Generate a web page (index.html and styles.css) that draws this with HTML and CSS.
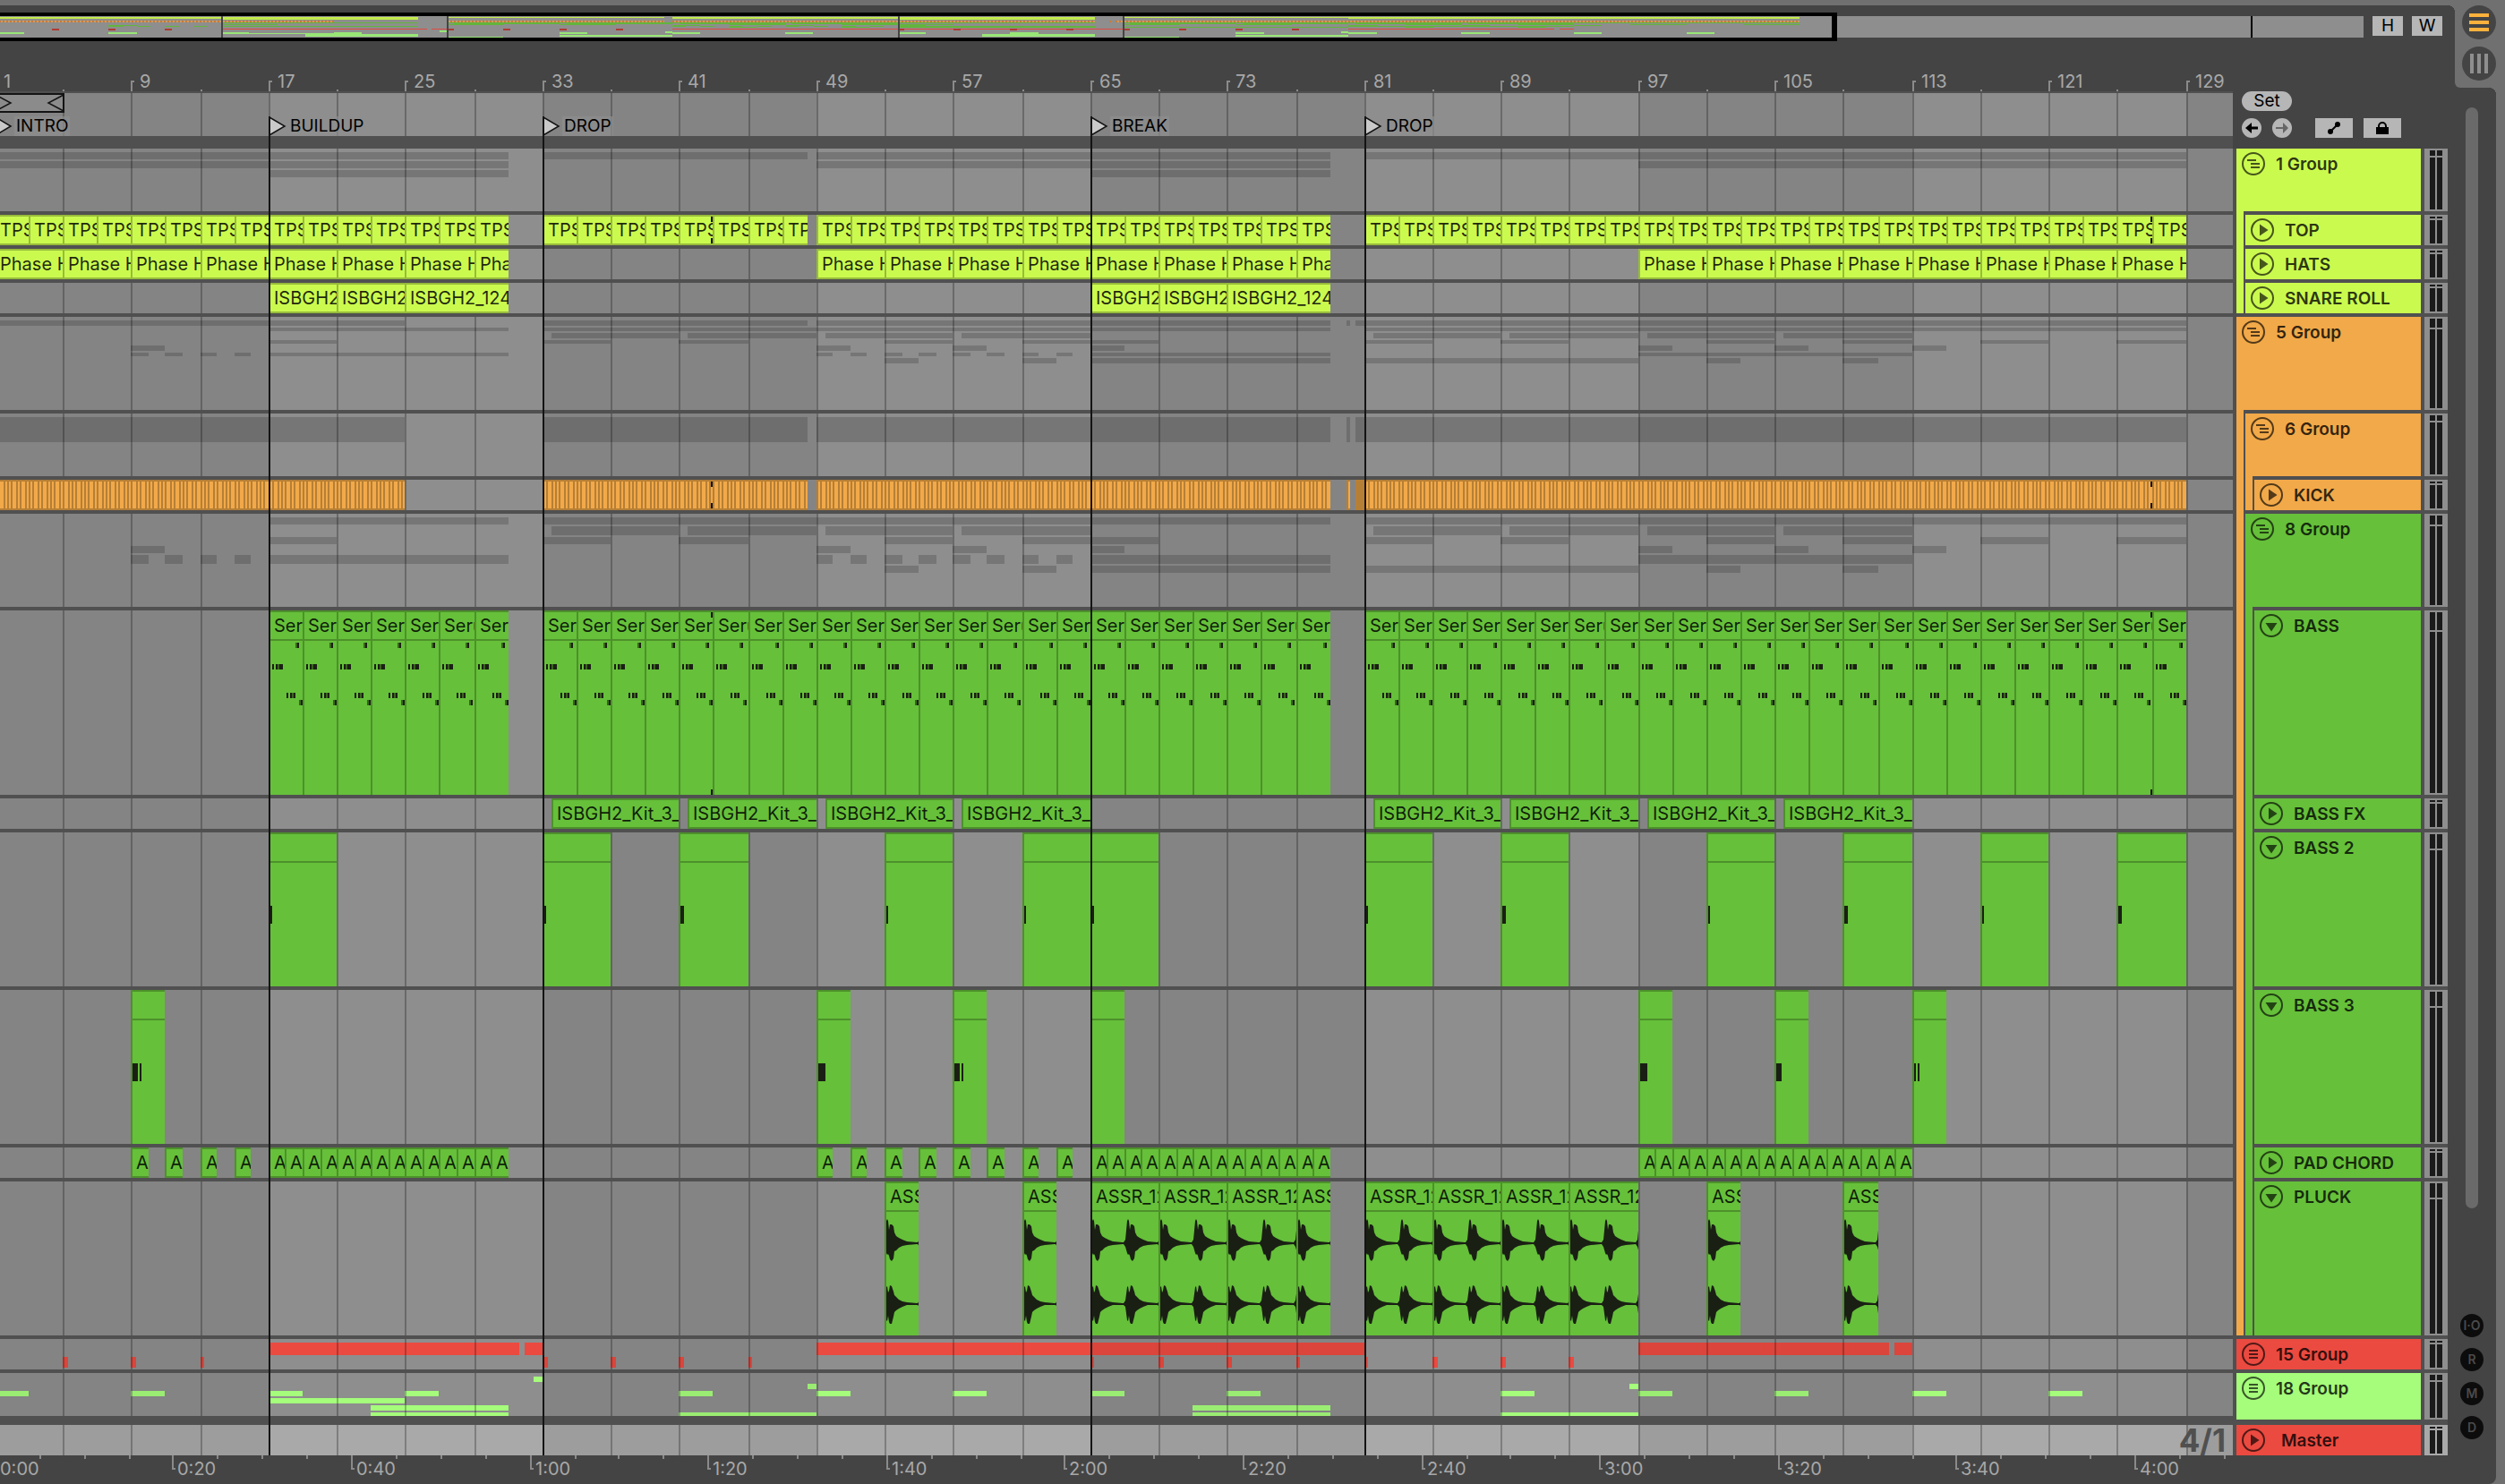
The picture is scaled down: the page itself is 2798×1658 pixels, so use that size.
FILE: index.html
```html
<!DOCTYPE html>
<html lang="en">
<head>
<meta charset="utf-8">
<title>Arrangement</title>
<link rel="stylesheet" href="styles.css">
</head>
<body>
<svg class="symbols" aria-hidden="true">
  <symbol id="i-group" viewBox="0 0 26 26"><circle cx="13" cy="13" r="12" fill="none" stroke="currentColor" stroke-width="2"/><path d="M6 9h10M10 13h10M10 17h10" stroke="currentColor" stroke-width="2"/></symbol>
  <symbol id="i-folded" viewBox="0 0 26 26"><circle cx="13" cy="13" r="12" fill="none" stroke="currentColor" stroke-width="2"/><path d="M8 9h10M8 13h10M8 17h10" stroke="currentColor" stroke-width="2"/></symbol>
  <symbol id="i-play" viewBox="0 0 26 26"><circle cx="13" cy="13" r="12" fill="none" stroke="currentColor" stroke-width="2"/><path d="M10 6.5v13l9.5-6.5z" fill="currentColor"/></symbol>
  <symbol id="i-open" viewBox="0 0 26 26"><circle cx="13" cy="13" r="12" fill="none" stroke="currentColor" stroke-width="2"/><path d="M6.5 10h13l-6.5 9.5z" fill="currentColor"/></symbol>
  <symbol id="i-flag" viewBox="0 0 20 22"><path d="M1 1v20l17-10z" fill="#c9c9c9" stroke="#111" stroke-width="1.5"/></symbol>
</svg>

<main class="panel">
  <div class="overview-bar">
    <div class="overview" id="overview"><div class="overview-range"></div><div class="overview-end"></div></div>
    <button class="flat-btn">H</button>
    <button class="flat-btn">W</button>
  </div>

  <div class="arrangement">
    <section class="timeline">
      <div class="bar-ruler" id="bar-ruler"></div>
      <div class="timeline-body" id="timeline-body">
        <div class="lane scrub" id="scrub"></div>
        <div class="lane h-group group-lane" data-track="g1"></div>
        <div class="lane h-row" data-track="top"></div>
        <div class="lane h-row" data-track="hats"></div>
        <div class="lane h-row" data-track="snare"></div>
        <div class="lane h-group-tall group-lane" data-track="g5"></div>
        <div class="lane h-group group-lane" data-track="g6"></div>
        <div class="lane h-row" data-track="kick"></div>
        <div class="lane h-group-tall group-lane" data-track="g8"></div>
        <div class="lane h-bass" data-track="bass"></div>
        <div class="lane h-row" data-track="bassfx"></div>
        <div class="lane h-open" data-track="bass2"></div>
        <div class="lane h-open" data-track="bass3"></div>
        <div class="lane h-row" data-track="pad"></div>
        <div class="lane h-open" data-track="pluck"></div>
        <div class="lane h-row group-lane" data-track="g15"></div>
        <div class="lane h-last group-lane" data-track="g18"></div>
        <div class="lane h-row master-lane"><span class="signature">4/1</span></div>
      </div>
      <div class="time-ruler" id="time-ruler"></div>
    </section>

    <section class="side">
      <div class="controls">
        <button class="pill">Set</button>
        <div class="control-row">
          <button class="round" aria-label="Previous locator"><svg width="22" height="22" viewBox="0 0 22 22"><path d="M18 11H9" stroke="#000" stroke-width="3"/><path d="M4 11l7-6v12z" fill="#000"/></svg></button>
          <button class="round next" aria-label="Next locator"><svg width="22" height="22" viewBox="0 0 22 22"><path d="M4 11h9" stroke="#666" stroke-width="2"/><path d="M18 11l-6-6v12z" fill="#666"/></svg></button>
          <button class="wide automation" aria-label="Automation mode"><svg width="42" height="22" viewBox="0 0 42 22"><path d="M17 15l8-8" stroke="#000" stroke-width="2"/><circle cx="17" cy="15" r="3" fill="#000"/><circle cx="25" cy="7" r="3" fill="#000"/></svg></button>
          <button class="wide" aria-label="Lock envelopes"><svg width="42" height="22" viewBox="0 0 42 22"><path d="M14 10h14v8H14z" fill="#000"/><path d="M17 11V9a4 4 0 0 1 8 0v2" fill="none" stroke="#000" stroke-width="2"/></svg></button>
        </div>
      </div>

      <div class="track-area">
        <div class="headers">
          <div class="group lime">
            <div class="title h-group"><button class="icon" aria-label="Fold"><svg><use href="#i-group"/></svg></button><span>1 Group</span></div>
            <div class="children">
              <div class="title lime h-row"><button class="icon" aria-label="Unfold"><svg><use href="#i-play"/></svg></button><span>TOP</span></div>
              <div class="title lime h-row"><button class="icon" aria-label="Unfold"><svg><use href="#i-play"/></svg></button><span>HATS</span></div>
              <div class="title lime h-row"><button class="icon" aria-label="Unfold"><svg><use href="#i-play"/></svg></button><span>SNARE ROLL</span></div>
            </div>
          </div>
          <div class="group orange">
            <div class="title h-group-tall"><button class="icon" aria-label="Fold"><svg><use href="#i-group"/></svg></button><span>5 Group</span></div>
            <div class="children">
              <div class="group orange">
                <div class="title h-group"><button class="icon" aria-label="Fold"><svg><use href="#i-group"/></svg></button><span>6 Group</span></div>
                <div class="children">
                  <div class="title orange h-row"><button class="icon" aria-label="Unfold"><svg><use href="#i-play"/></svg></button><span>KICK</span></div>
                </div>
              </div>
              <div class="group green">
                <div class="title h-group-tall"><button class="icon" aria-label="Fold"><svg><use href="#i-group"/></svg></button><span>8 Group</span></div>
                <div class="children">
                  <div class="title green h-bass"><button class="icon" aria-label="Fold"><svg><use href="#i-open"/></svg></button><span>BASS</span></div>
                  <div class="title green h-row"><button class="icon" aria-label="Unfold"><svg><use href="#i-play"/></svg></button><span>BASS FX</span></div>
                  <div class="title green h-open"><button class="icon" aria-label="Fold"><svg><use href="#i-open"/></svg></button><span>BASS 2</span></div>
                  <div class="title green h-open"><button class="icon" aria-label="Fold"><svg><use href="#i-open"/></svg></button><span>BASS 3</span></div>
                  <div class="title green h-row"><button class="icon" aria-label="Unfold"><svg><use href="#i-play"/></svg></button><span>PAD CHORD</span></div>
                  <div class="title green h-open"><button class="icon" aria-label="Fold"><svg><use href="#i-open"/></svg></button><span>PLUCK</span></div>
                </div>
              </div>
            </div>
          </div>
          <div class="title red h-row"><button class="icon" aria-label="Unfold"><svg><use href="#i-folded"/></svg></button><span>15 Group</span></div>
          <div class="title mint h-last-head"><button class="icon" aria-label="Unfold"><svg><use href="#i-folded"/></svg></button><span>18 Group</span></div>
          <div class="title red h-row master"><button class="icon" aria-label="Unfold"><svg><use href="#i-play"/></svg></button><span>Master</span></div>
        </div>
        <div class="meters">
          <div class="meter h-group"><i></i><i></i></div>
          <div class="meter h-row"><i></i><i></i></div>
          <div class="meter h-row"><i></i><i></i></div>
          <div class="meter h-row"><i></i><i></i></div>
          <div class="meter h-group-tall"><i></i><i></i></div>
          <div class="meter h-group"><i></i><i></i></div>
          <div class="meter h-row"><i></i><i></i></div>
          <div class="meter h-group-tall"><i></i><i></i></div>
          <div class="meter h-bass"><i></i><i></i></div>
          <div class="meter h-row"><i></i><i></i></div>
          <div class="meter h-open"><i></i><i></i></div>
          <div class="meter h-open"><i></i><i></i></div>
          <div class="meter h-row"><i></i><i></i></div>
          <div class="meter h-open"><i></i><i></i></div>
          <div class="meter h-row"><i></i><i></i></div>
          <div class="meter h-last-head"><i></i><i></i></div>
          <div class="meter h-row master"><i></i><i></i></div>
        </div>
      </div>
    </section>

    <aside class="rail">
      <div class="scrollbar"></div>
      <div class="rail-buttons">
        <button class="dot">I·O</button>
        <button class="dot">R</button>
        <button class="dot">M</button>
        <button class="dot">D</button>
      </div>
    </aside>
  </div>
</main>

<nav class="view-toggles">
  <button class="view-toggle" aria-label="Arrangement view"><svg width="38" height="38" viewBox="0 0 38 38"><path d="M8 11h22M8 19h22M8 27h22" stroke="#fbb13c" stroke-width="4"/></svg></button>
  <button class="view-toggle" aria-label="Session view"><svg width="38" height="38" viewBox="0 0 38 38"><path d="M11 8v22M19 8v22M27 8v22" stroke="#8e8e8e" stroke-width="4"/></svg></button>
</nav>
<script src="timeline.js"></script>
</body>
</html>
```
FILE: styles.css
```css
* { box-sizing: border-box; }

:root {
  --panel: #444;
  --line: #505050;
  --lane: #8e8e8e;
  --frame: #707070;
  --control: #b6b6b6;
}

body {
  margin: 0;
  background: var(--frame);
  color: #000;
  font: 19px/24px Inter, "Liberation Sans", sans-serif;
  position: relative;
  overflow-x: hidden;
}

button {
  margin: 0;
  padding: 0;
  border: 0;
  background: none;
  color: inherit;
  font: inherit;
  display: flex;
  align-items: center;
  justify-content: center;
}

.symbols { position: absolute; width: 0; height: 0; }

.panel {
  margin: 6px 10px 0 0;
  padding-top: 8px;
  background: var(--panel);
  border-radius: 0 0 8px 0;
}

/* overview strip */
.overview-bar { display: flex; gap: 10px; padding-right: 60px; }
.overview {
  flex: 1;
  height: 24px;
  margin: 4px 0;
  background: var(--lane);
  position: relative;
}
.overview-range {
  position: absolute;
  z-index: 3;
  left: 0;
  top: -4px;
  width: 77.73%;
  height: 32px;
  border: solid #000;
  border-width: 4px 6px 4px 0;
}
.overview-end { position: absolute; left: 95.23%; top: 0; width: 2px; height: 24px; background: #000; }
.flat-btn { width: 34px; height: 22px; margin-top: 4px; background: var(--control); }
.mini { position: absolute; }
.mini.kick-mini { background: repeating-linear-gradient(90deg, #c87a35 0 2px, #c79e6c 2px 4px); }
.overview .mini.locator { background: #444; width: 2px; height: 24px; top: 0; z-index: 2; }

/* main columns */
.arrangement { display: flex; }
.timeline { flex: 1; min-width: 0; overflow: hidden; }
.side { width: 240px; }
.rail { width: 54px; }

/* rulers */
.bar-ruler { height: 56px; position: relative; }
.time-ruler { height: 32px; position: relative; }
.tick { position: absolute; width: 2px; background: #8a8a8a; }
.bar-ruler .tick { bottom: 0; height: 2px; }
.bar-ruler .tick.major {
  width: 4px;
  height: 12px;
  background: none;
  border: solid #8a8a8a;
  border-width: 2px 0 0 2px;
}
.time-ruler .tick { top: 0; height: 4px; }
.time-ruler .tick.major {
  width: 4px;
  height: 16px;
  background: none;
  border: solid #8a8a8a;
  border-width: 0 0 2px 2px;
}
.tick-label { position: absolute; color: #a8a8a8; font-size: 20px; }
.bar-ruler .tick-label { top: 33px; }
.time-ruler .tick-label { top: 3px; }

/* lanes */
.timeline-body {
  position: relative;
  display: flex;
  flex-direction: column;
  gap: 4px;
  padding-top: 2px;
  background: var(--line);
}
.lane { position: relative; overflow: hidden; background: var(--lane); flex: none; }
.scrub { height: 48px; margin-bottom: 10px; }
.master-lane { background: #a9a9a9; margin-top: 6px; }
.h-row { height: 34px; --peak: 2px; }
.h-group { height: 70px; --peak: 6px; }
.h-group-tall { height: 104px; --peak: 10px; }
.h-bass { height: 206px; --peak: 20px; }
.h-open { height: 172px; --peak: 16px; }
.h-last { height: 48px; }
.h-last-head { height: 52px; --peak: 6px; }

.shade, .grid-line { position: absolute; top: 0; bottom: 0; z-index: 2; }
.shade { background: rgba(0, 0, 0, .065); }
.grid-line { width: 2px; background: rgba(0, 0, 0, .25); }
.locator-line { position: absolute; top: 28px; bottom: 0; width: 2px; background: #141414; z-index: 5; }
.signature {
  position: absolute;
  z-index: 3;
  right: 8px;
  top: 0;
  font-size: 35px;
  line-height: 34px;
  font-weight: 700;
  color: var(--line);
}

/* scrub area */
.loop-brace { position: absolute; left: -6px; top: 0; z-index: 3; }
.locator { position: absolute; z-index: 3; top: 26px; height: 22px; display: flex; gap: 2px; }
.locator svg { width: 20px; height: 22px; }
.locator span { background: rgba(142, 142, 142, .7); line-height: 22px; padding: 0 2px; }

/* clips */
.clip {
  position: absolute;
  z-index: 3;
  top: 0;
  bottom: 0;
  overflow: hidden;
  border: solid var(--edge);
  border-width: 2px 0 2px 2px;
  background: var(--fill);
  color: rgba(0, 0, 0, .85);
  white-space: nowrap;
  font-size: 20px;
}
.clip.open { border-bottom-width: 0; }
.clip-name { display: block; height: 30px; line-height: 30px; padding-left: 4px; }
.open .clip-name { height: 32px; border-bottom: 2px solid var(--edge); }
.lime-clip { --fill: #cbfa4f; --edge: #98bb3b; }
.orange-clip { --fill: #f2a949; --edge: #b67f36; }
.green-clip { --fill: #66c03a; --edge: #4d912b; }
.note { position: absolute; background: #1a1f14; }
.note.soft { background: #39651f; }
.clip .wave { position: absolute; left: 0; top: 32px; width: 84px; height: 136px; }
.mark { position: absolute; z-index: 4; width: 2px; height: 6px; background: #141414; }
.mark.upper { top: 2px; }
.mark.lower { bottom: 2px; }
.h-bass .mark.lower { bottom: 0; }
.summary { position: absolute; z-index: 1; background: rgba(0, 0, 0, .17); }
.summary.red { background: #eb4a40; }
.summary.mint { background: #a5fd7b; }

/* side controls */
.controls { height: 120px; padding: 56px 0 0 10px; display: flex; flex-direction: column; gap: 8px; align-items: flex-start; }
.pill { width: 56px; height: 22px; border-radius: 11px; background: var(--control); }
.control-row { display: flex; gap: 12px; }
.round { width: 22px; height: 22px; border-radius: 11px; background: var(--control); }
.wide { width: 42px; height: 22px; background: var(--control); }
.automation { margin-left: 14px; }

/* track headers */
.track-area { display: flex; gap: 4px; padding-left: 4px; background: var(--line); }
.headers { flex: 1; display: flex; flex-direction: column; gap: 4px; }
.meters { width: 26px; display: flex; flex-direction: column; gap: 4px; }
.children { margin-left: 8px; padding: 4px 0 0 2px; background: var(--line); display: flex; flex-direction: column; gap: 4px; }
.lime { background: #cbfa4f; }
.orange { background: #f2a949; }
.green { background: #66c03a; }
.red { background: #eb4a40; }
.mint { background: #a5fd7b; }
.title { display: flex; align-items: flex-start; gap: 12px; padding: 4px 0 0 6px; font-weight: 600; color: rgba(0, 0, 0, .8); flex: none; }
.title span { line-height: 27px; }
.title.master { margin-top: 2px; gap: 18px; }
.icon { width: 26px; height: 26px; color: rgba(0, 0, 0, .66); flex: none; }
.icon svg { width: 26px; height: 26px; display: block; }

.meter { background: var(--lane); padding: 2px 6px; display: flex; gap: 2px; flex: none; }
.meter.master { margin-top: 2px; background: #a9a9a9; }
.meter i { width: 6px; background: linear-gradient(#1a1a1a var(--peak), transparent var(--peak) calc(var(--peak) + 2px), #1a1a1a calc(var(--peak) + 2px)); }

/* right rail */
.rail { display: flex; flex-direction: column; align-items: center; padding: 74px 0 50px; }
.scrollbar { flex: 1; width: 14px; border-radius: 7px; background: #6a6a6a; margin-bottom: 118px; }
.rail-buttons { display: flex; flex-direction: column; gap: 12px; }
.dot { width: 26px; height: 26px; border-radius: 13px; background: #0c0c0c; color: #4a4a4a; font-size: 14px; font-weight: 600; }

/* view switch sits over the panel's top right corner */
.view-toggles {
  position: absolute;
  top: 0;
  right: 0;
  width: 56px;
  height: 98px;
  padding: 6px 0 0 8px;
  background: var(--frame);
  border-bottom-left-radius: 6px;
  display: flex;
  flex-direction: column;
  gap: 8px;
}
.view-toggles::before, .view-toggles::after {
  content: "";
  position: absolute;
  width: 8px;
  height: 8px;
  background: radial-gradient(circle at 0 100%, var(--panel) 8px, var(--frame) 8px);
}
.view-toggles::before { left: -8px; top: 6px; }
.view-toggles::after { right: 10px; top: 98px; }
.view-toggle { width: 38px; height: 38px; border-radius: 19px; background: var(--panel); }
```
FILE: timeline.js
```js
// Bars that fit in the lanes and in the overview, and the bar at the left edge.
const LANE_BARS = 130.426;
const OVERVIEW_BARS = 167.73;
const FIRST_BAR = 1.2745;
const SECONDS_PER_BAR = 1.92;

const repeat = (from, to, step) => {
  const out = [];
  for (let b = from; b < to; b += step) out.push([b, Math.min(b + step, to)]);
  return out;
};
const each = (starts, length) => starts.map(s => [s, s + length]);

const EXTENTS = {
  top: [[1, 31], [33, 48.48], [49, 79], [81, 129]],
  hats: [[1, 31], [49, 79], [97, 129]],
  snare: [[17, 31], [65, 79]],
  kick: [[1, 25], [33, 48.48], [49, 79], [80, 80.15], [80.49, 81], [81, 129]],
  bass: [[17, 31], [33, 79], [81, 129]],
  bassfx: each([33.5, 41.5, 49.5, 57.5, 81.5, 89.5, 97.5, 105.5], 7.5),
  bass2: each([17, 33, 41, 53, 61, 65, 81, 89, 101, 109, 117, 125], 4),
  bass3: each([9, 49, 57, 65, 97, 105, 113], 2),
  pad: [...each([9, 11, 13, 15], 1), [17, 31], ...each([49, 51, 53, 55, 57, 59, 61, 63], 1), [65, 79], [97, 113]],
  pluck: [[53, 55], [61, 63], [65, 79], [81, 97], [101, 103], [109, 111]]
};

const split = (extents, step) => extents.flatMap(([a, b]) => repeat(a, b, step));

const TRACKS = {
  top: { color: 'lime', name: 'TPS_Top', clips: split(EXTENTS.top, 2), marks: true },
  hats: { color: 'lime', name: 'Phase Hat', clips: split(EXTENTS.hats, 4) },
  snare: { color: 'lime', name: 'ISBGH2_124', clips: [[17, 21], [21, 25], [25, 31], [65, 69], [69, 73], [73, 79]] },
  kick: { color: 'orange', name: '', clips: split(EXTENTS.kick.filter(e => e[0] < 80 || e[0] > 80.9), .25).concat([[80, 80.15], [80.49, 80.6], [80.6, 80.7], [80.7, 80.8], [80.8, 80.9], [80.9, 81]]), marks: true },
  bass: { color: 'green', name: 'Serum', open: true, clips: split(EXTENTS.bass, 2), marks: true,
    notes: () => [[28, 34, 2, 6, 1], [30, 34, 2, 6], [2, 58, 2, 6], [6, 58, 2, 6], [8, 58, 2, 6, 1], [10, 58, 4, 6], [18, 90, 2, 6], [22, 90, 2, 6], [24, 90, 2, 6, 1], [26, 90, 2, 6], [32, 98, 2, 6, 1], [34, 98, 2, 6]] },
  bassfx: { color: 'green', name: 'ISBGH2_Kit_3_A', clips: EXTENTS.bassfx },
  bass2: { color: 'green', name: '', open: true, clips: EXTENTS.bass2,
    notes: bar => [[0, 80, [41, 89, 109, 125].includes(bar) ? 4 : 2, 20]] },
  bass3: { color: 'green', name: '', open: true, clips: EXTENTS.bass3,
    notes: bar => ({ 9: [[0, 80, 6, 20], [8, 80, 2, 20]], 49: [[0, 80, 8, 20]], 57: [[0, 80, 6, 20], [8, 80, 2, 20]], 97: [[0, 80, 8, 20]], 105: [[0, 80, 6, 20]], 113: [[0, 80, 2, 20], [4, 80, 2, 20]] }[bar] || []) },
  pad: { color: 'green', name: 'A', clips: split(EXTENTS.pad, 1) },
  pluck: { color: 'green', name: 'ASSR_124', open: true, wave: true, clips: split(EXTENTS.pluck, 4) }
};

// [extents, top, height, colour]
const rows = list => list.map(([key, top, height]) => [EXTENTS[key], top, height]);
const HITS = [5, 9, 13, 33, 37, 41, 45, 65, 69, 73, 77, 81, 85, 89, 93];
const RISERS = [[17, 31.63], [31.96, 33], [49, 81], [97, 111.63], [111.96, 113]];
const FX = [
  [[[32.5, 33]], 4, 6],
  [[[48.5, 49], [96.5, 97]], 12, 6],
  [each([1, 9, 17, 25, 41, 49, 57, 65, 73, 89, 97, 105, 113, 121], 2), 20, 6],
  [[[17, 25]], 28, 6],
  [[[23, 31], [71, 79]], 36, 6],
  [[[23, 31], [41, 49], [71, 79], [89, 97]], 44, 4]
];
const SUMMARIES = {
  g1: rows([['top', 4, 8], ['hats', 14, 8], ['snare', 24, 8]]),
  g5: rows([['kick', 4, 6], ['bass', 12, 4], ['bassfx', 18, 6], ['bass2', 26, 4], ['bass3', 32, 6], ['pad', 40, 4], ['pluck', 46, 6]]),
  g6: rows([['kick', 4, 28]]),
  g8: rows([['bass', 4, 8], ['bassfx', 14, 10], ['bass2', 26, 8], ['bass3', 36, 8], ['pad', 46, 10], ['pluck', 58, 8]]),
  g15: [[RISERS, 4, 14, 'red'], [each(HITS, .28), 20, 12, 'red']],
  g18: FX.map(r => [...r, 'mint'])
};
const LOCATORS = [[1, 'INTRO'], [17, 'BUILDUP'], [33, 'DROP'], [65, 'BREAK'], [81, 'DROP']];

const UPPER = [[-5, 1, 1], [-3, 4, 4], [-1, 25, 11], [0, 27, 13], [1, 25, 12], [2, 15, 14], [3, 21, 18], [5, 21, 20], [7, 19, 17], [8, 12, 9], [10, 8, 8], [13, 6, 5], [17, 4, 3], [22, 2, 2], [33, 1, 1]];
const LOWER = [[-5, 1, 1], [-3, 4, 3], [-1, 19, 18], [0, 20, 19], [1, 13, 13], [2, 15, 20], [3, 21, 22], [5, 20, 22], [7, 14, 14], [8, 10, 9], [10, 8, 7], [13, 5, 5], [17, 3, 3], [22, 2, 1], [33, 1, 1]];
const envelope = (shape, centre) => {
  const pts = [1, 40, 78].flatMap(x => shape.map(([dx, up, down]) => [x + dx, up, down]));
  const top = pts.map(([x, up]) => `${x} ${centre - up}`);
  const bottom = pts.reverse().map(([x, , down]) => `${x} ${centre + down}`);
  return `M${top.concat(bottom).join('L')}Z`;
};
const WAVE = `<svg class="wave" viewBox="0 0 84 136"><path fill="#1a1f14" d="${envelope(UPPER, 35)}${envelope(LOWER, 103)}"/></svg>`;

const box = (cls, left, width, top, height) => {
  const el = document.createElement('div');
  el.className = cls;
  el.style.left = left + 'px';
  if (width !== undefined) el.style.width = width + 'px';
  if (top !== undefined) el.style.top = top + 'px';
  if (height !== undefined) el.style.height = height + 'px';
  el.dataset.drawn = '';
  return el;
};

function render() {
  document.querySelectorAll('[data-drawn]').forEach(el => el.remove());
  const body = document.getElementById('timeline-body');
  const ppb = body.clientWidth / LANE_BARS;
  const x = bar => Math.floor((bar - FIRST_BAR) * ppb / 2) * 2;

  document.querySelectorAll('.lane').forEach(lane => {
    for (let b = 1; b <= 129; b += 32) lane.append(box('shade', x(b), x(b + 16) - x(b)));
    for (let b = 5; b <= 129; b += 4) lane.append(box('grid-line', x(b)));
    const track = TRACKS[lane.dataset.track];
    if (track) {
      track.clips.forEach(([from, to]) => {
        const clip = box(`clip ${track.color}-clip${track.open ? ' open' : ''}`, x(from), Math.max(2, x(to) - x(from)));
        if (track.name || track.open) {
          const label = document.createElement('span');
          label.className = 'clip-name';
          label.textContent = track.name;
          clip.append(label);
        }
        if (track.wave) clip.insertAdjacentHTML('beforeend', WAVE);
        if (track.notes) track.notes(from).forEach(n => clip.append(box(n[4] ? 'note soft' : 'note', n[0], n[2], n[1], n[3])));
        lane.append(clip);
      });
      if (track.marks) [43, 127].forEach(b => lane.append(box('mark upper', x(b) - 2), box('mark lower', x(b) - 2)));
    }
    (SUMMARIES[lane.dataset.track] || []).forEach(([extents, top, height, color]) =>
      extents.forEach(([from, to]) => lane.append(box(`summary ${color || ''}`, x(from), x(to) - x(from), top, height))));
  });

  const scrub = document.getElementById('scrub');
  const brace = box('loop-brace', x(1));
  const w = x(5) + 2 - x(1);
  brace.innerHTML = `<svg width="${w}" height="22"><path d="M1 1h${w - 2}v20H1z" fill="#8b8b8b" stroke="#141414" stroke-width="2"/><path d="M1 2l17 9l-17 9M${w - 1} 2l-17 9l17 9" fill="none" stroke="#141414" stroke-width="1.5"/></svg>`;
  scrub.append(brace);
  LOCATORS.forEach(([bar, name]) => {
    const loc = box('locator', x(bar));
    loc.innerHTML = `<svg><use href="#i-flag"/></svg><span>${name}</span>`;
    scrub.append(loc);
    if (bar > 1) body.append(box('locator-line', x(bar)));
  });

  const ruler = document.getElementById('bar-ruler');
  for (let b = 1; b <= 129; b += 4) {
    const major = b % 8 === 1;
    ruler.append(box(major ? 'tick major' : 'tick', x(b)));
    if (major) {
      const label = box('tick-label', x(b) + 10);
      label.textContent = b;
      ruler.append(label);
    }
  }

  const clock = document.getElementById('time-ruler');
  for (let t = 0; t <= 250; t += 5) {
    const left = x(1 + t / SECONDS_PER_BAR);
    const major = t % 20 === 0;
    clock.append(box(major ? 'tick major' : 'tick', left));
    if (major) {
      const label = box('tick-label', left + 6);
      label.textContent = `${Math.floor(t / 60)}:${String(t % 60).padStart(2, '0')}`;
      clock.append(label);
    }
  }

  const overview = document.getElementById('overview');
  const oppb = overview.clientWidth / OVERVIEW_BARS;
  const ox = bar => Math.floor((bar - FIRST_BAR) * oppb);
  const mini = (extents, top, height, color, cls = '') => extents.forEach(([from, to]) => {
    const el = box('mini ' + cls, ox(from), ox(to) - ox(from), top, height);
    if (color) el.style.background = color;
    overview.append(el);
  });
  mini(EXTENTS.top, 1, 1, '#c4ee4a');
  mini(EXTENTS.hats, 2, 1, '#bfe84a');
  mini(EXTENTS.snare, 3, 1, '#c4ee4a');
  mini(EXTENTS.kick, 5, 2, '', 'kick-mini');
  ['bass', 'bassfx', 'bass2', 'bass3', 'pad', 'pluck'].forEach((key, i) => mini(EXTENTS[key], 7 + i, 1, '#62b53c'));
  mini(RISERS, 14, 1, '#e04a42');
  mini(each(HITS, .5), 14, 2, '#b03a32');
  [[16, 2], [17, 2], [18, 2], [19, 1], [20, 2], [21, 2]].forEach(([top, height], i) => mini(FX[i][0], top, height, '#98e676'));
  mini([[33, 37], [81, 85]], 23, 1, '#98e676');
  LOCATORS.slice(1).forEach(([bar]) => overview.append(box('mini locator', ox(bar))));
}

render();
window.addEventListener('resize', render);
```
